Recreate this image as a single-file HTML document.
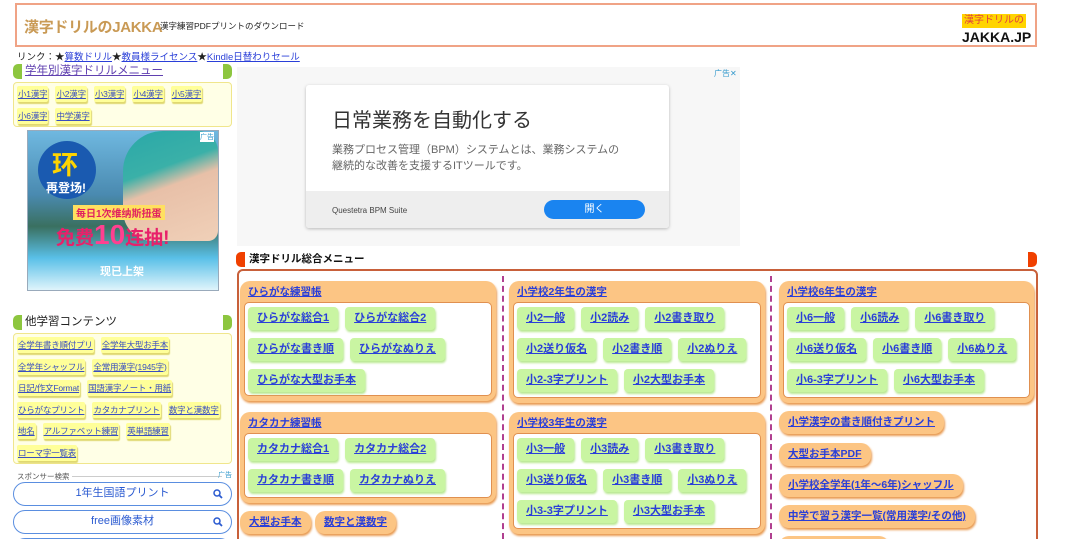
<!DOCTYPE html>
<html style="width:1080px;height:539px;overflow:hidden"><head><meta charset="utf-8"><style>
*{box-sizing:border-box;margin:0;padding:0}
body{width:1080px;height:539px;overflow:hidden;background:#fff;font-family:"Liberation Sans","Noto Sans CJK JP",sans-serif;position:relative}
.abs{position:absolute}
a{color:#2a3fd8;text-decoration:underline}
.hdr{left:15px;top:3px;width:1022px;height:44px;border:2px solid #f0a386}
.title{left:7px;top:11px;font-size:15px;font-weight:bold;color:#c99a55;letter-spacing:-0.3px}
.sub{left:143px;top:15px;font-size:8.5px;color:#222}
.logo{left:943px;top:5px;width:76px;height:36px}
.sidebox{background:#ffffe6;border:1px solid #f0e68c;border-radius:4px;padding:3px 0 0 3px;display:flex;flex-wrap:wrap}
.yb{background:#ffff99;box-shadow:1px 2px 1px #e0d870;border-radius:2px;font-size:8.5px;letter-spacing:-0.2px;height:16px;line-height:16px;padding:0 1px;margin:0 7px 5.5px 0;white-space:nowrap}
.yb a{color:#3a4fc0}
.cap{background:#8dc63f;width:9px;height:15px}
.panel{background:#fcc584;border-radius:10px;box-shadow:1px 2px 2px #e89a50;padding:4px 4px 5px 4px}
.panel .t{font-size:10.5px;height:17px;line-height:14px;padding-left:4px;font-weight:bold}
.inner{background:#fff;border:1px solid #e09050;border-radius:5px;padding:4px 0 0 3px;display:flex;flex-wrap:wrap}
.gb{background:#c9f5a2;border-radius:4px;box-shadow:1px 2px 2px #b8e890;height:23px;line-height:23px;padding:0 9px;margin:0 7px 8px 0;font-size:11px;font-weight:bold;white-space:nowrap}
.ob{background:#fcc584;border-radius:10px;box-shadow:1px 2px 2px #e89a50;height:23px;line-height:22px;padding:0 9px;font-size:10.5px;font-weight:bold;white-space:nowrap;display:inline-block}
.pill{left:13px;width:219px;height:24px;border:1.5px solid #5a8ee0;border-radius:12px;text-align:center;font-size:11px;line-height:21px;color:#2a5ad0}
.pill svg{position:absolute;right:8px;top:6px}
</style></head><body>

<div class="abs hdr">
 <div class="abs title">漢字ドリルのJAKKA</div>
 <div class="abs sub">漢字練習PDFプリントのダウンロード</div>
 <div class="abs logo">
  <div style="background:#ffd400;color:#e04040;font-size:10px;line-height:14px;display:inline-block;padding:0 2px;margin-left:2px">漢字ドリルの</div>
  <div style="font-size:14px;font-weight:bold;color:#111;line-height:18px;text-align:left;padding-left:2px">JAKKA.JP</div>
 </div>
</div>

<div class="abs" style="left:17px;top:49px;font-size:9.5px;color:#222">リンク：★<a href="#">算数ドリル</a>★<a href="#">教員様ライセンス</a>★<a href="#">Kindle日替わりセール</a></div>

<div class="abs cap" style="left:13px;top:64px;border-radius:5px 0 0 5px"></div>
<div class="abs cap" style="left:223px;top:64px;border-radius:0 5px 5px 0"></div>
<div class="abs" style="left:25px;top:64px;font-size:11.5px;line-height:15px"><a href="#" style="color:#6040b0">学年別漢字ドリルメニュー</a></div>
<div class="abs sidebox" style="left:13px;top:82px;width:219px;height:45px">
 <div class="yb"><a>小1漢字</a></div><div class="yb"><a>小2漢字</a></div><div class="yb"><a>小3漢字</a></div><div class="yb"><a>小4漢字</a></div><div class="yb"><a>小5漢字</a></div>
 <div class="yb"><a>小6漢字</a></div><div class="yb"><a>中学漢字</a></div>
</div>

<div class="abs" style="left:27px;top:130px;width:192px;height:161px;background:linear-gradient(180deg,#6fb8e0 0%,#4a8ab0 40%,#3a7060 60%,#5ac0e8 80%,#dff4fb 100%);overflow:hidden;border:1px solid #9ab">
 <div class="abs" style="left:10px;top:10px;width:58px;height:58px;border-radius:50%;background:#1a5ab0"></div>
 <div class="abs" style="left:24px;top:14px;font-size:26px;font-weight:bold;color:#ffd400">环</div>
 <div class="abs" style="left:18px;top:48px;font-size:12px;font-weight:bold;color:#fff">再登场!</div>
 <div class="abs" style="left:95px;top:0px;width:95px;height:110px;border-radius:40px 20px 10px 30px;background:linear-gradient(160deg,#2aa8a8 0%,#3ab0a8 35%,#e8c0a8 50%,#f0d0b8)"></div>
 <div class="abs" style="left:45px;top:74px;font-size:10px;font-weight:bold;color:#e02060;background:#ffe060;padding:0 3px">每日1次维纳斯扭蛋</div>
 <div class="abs" style="left:28px;top:88px;font-size:19px;font-weight:bold;color:#e8206a">免费<span style="font-size:28px;color:#ff4090">10</span>连抽!</div>
 <div class="abs" style="left:72px;top:132px;font-size:11px;font-weight:bold;color:#fff">现已上架</div>
 <div class="abs" style="left:172px;top:1px;font-size:7px;color:#39c;background:#fff">广告</div>
</div>

<div class="abs cap" style="left:13px;top:315px;border-radius:5px 0 0 5px"></div>
<div class="abs cap" style="left:223px;top:315px;border-radius:0 5px 5px 0"></div>
<div class="abs" style="left:25px;top:315px;font-size:11.5px;line-height:15px;color:#222">他学習コンテンツ</div>
<div class="abs sidebox" style="left:13px;top:333px;width:219px;height:131px;padding-top:3px">
 <div class="yb"><a>全学年書き順付プリ</a></div><div class="yb"><a>全学年大型お手本</a></div>
 <div class="yb"><a>全学年シャッフル</a></div><div class="yb"><a>全常用漢字(1945字)</a></div>
 <div class="yb"><a>日記/作文Format</a></div><div class="yb"><a>国語漢字ノート・用紙</a></div>
 <div class="yb"><a>ひらがなプリント</a></div><div class="yb"><a>カタカナプリント</a></div><div class="yb" style="margin-right:0"><a>数字と漢数字</a></div>
 <div class="yb"><a>地名</a></div><div class="yb"><a>アルファベット練習</a></div><div class="yb"><a>英単語練習</a></div>
 <div class="yb"><a>ローマ字一覧表</a></div>
</div>
<div class="abs" style="left:17px;top:471px;font-size:7.5px;color:#555">スポンサー検索</div>
<div class="abs" style="left:72px;top:476px;width:150px;border-top:1px solid #ccc"></div>
<div class="abs" style="left:218px;top:470px;font-size:7px;color:#39c">广告</div>
<div class="abs pill" style="top:482px">1年生国語プリント<svg width="10" height="10" viewBox="0 0 10 10"><circle cx="4" cy="4" r="3" fill="none" stroke="#2a5ad0" stroke-width="1.5"/><path d="M6 6L9 9" stroke="#2a5ad0" stroke-width="1.8"/></svg></div>
<div class="abs pill" style="top:510px">free画像素材<svg width="10" height="10" viewBox="0 0 10 10"><circle cx="4" cy="4" r="3" fill="none" stroke="#2a5ad0" stroke-width="1.5"/><path d="M6 6L9 9" stroke="#2a5ad0" stroke-width="1.8"/></svg></div>
<div class="abs pill" style="top:538px"></div>

<div class="abs" style="left:237px;top:67px;width:503px;height:179px;background:#f7f7f7">
 <div class="abs" style="left:477px;top:1px;font-size:8px;color:#39c">广告✕</div>
 <div class="abs" style="left:69px;top:18px;width:363px;height:143px;background:#fff;border-radius:3px;box-shadow:0 1px 3px rgba(0,0,0,.25);overflow:hidden">
  <div class="abs" style="left:26px;top:19px;font-size:20px;color:#333">日常業務を自動化する</div>
  <div class="abs" style="left:26px;top:57px;font-size:11px;line-height:16px;color:#666">業務プロセス管理（BPM）システムとは、業務システムの<br>継続的な改善を支援するITツールです。</div>
  <div class="abs" style="left:0;top:106px;width:363px;height:37px;background:#eee">
   <div class="abs" style="left:26px;top:15px;font-size:8px;color:#444">Questetra BPM Suite</div>
   <div class="abs" style="left:238px;top:9px;width:101px;height:19px;border-radius:10px;background:#1a84f0;color:#fff;font-size:10px;text-align:center;line-height:19px">開く</div>
  </div>
 </div>
</div>

<div class="abs" style="left:236px;top:252px;width:9px;height:15px;background:#f04000;border-radius:5px 0 0 5px"></div>
<div class="abs" style="left:1028px;top:252px;width:9px;height:15px;background:#f04000;border-radius:0 5px 5px 0"></div>
<div class="abs" style="left:249px;top:252px;font-size:10.5px;font-weight:bold;color:#111;line-height:15px">漢字ドリル総合メニュー</div>

<div class="abs" style="left:237px;top:269px;width:801px;height:290px;border:2px solid #c8603a;border-radius:6px"></div>
<div class="abs" style="left:502px;top:276px;height:263px;border-left:2px dashed #b04090"></div>
<div class="abs" style="left:770px;top:276px;height:263px;border-left:2px dashed #b04090"></div>

<div class="abs panel" style="left:240px;top:281px;width:256px;height:120px">
 <div class="t"><a>ひらがな練習帳</a></div>
 <div class="inner" style="height:94px">
  <div class="gb"><a>ひらがな総合1</a></div><div class="gb"><a>ひらがな総合2</a></div>
  <div class="gb"><a>ひらがな書き順</a></div><div class="gb"><a>ひらがなぬりえ</a></div>
  <div class="gb"><a>ひらがな大型お手本</a></div>
 </div>
</div>
<div class="abs panel" style="left:240px;top:412px;width:256px;height:91px">
 <div class="t"><a>カタカナ練習帳</a></div>
 <div class="inner" style="height:65px">
  <div class="gb"><a>カタカナ総合1</a></div><div class="gb"><a>カタカナ総合2</a></div>
  <div class="gb"><a>カタカナ書き順</a></div><div class="gb"><a>カタカナぬりえ</a></div>
 </div>
</div>
<div class="abs ob" style="left:240px;top:511px"><a>大型お手本</a></div>
<div class="abs ob" style="left:315px;top:511px"><a>数字と漢数字</a></div>

<div class="abs panel" style="left:509px;top:281px;width:256px;height:122px">
 <div class="t"><a>小学校2年生の漢字</a></div>
 <div class="inner" style="height:96px">
  <div class="gb"><a>小2一般</a></div><div class="gb"><a>小2読み</a></div><div class="gb"><a>小2書き取り</a></div>
  <div class="gb"><a>小2送り仮名</a></div><div class="gb"><a>小2書き順</a></div><div class="gb"><a>小2ぬりえ</a></div>
  <div class="gb"><a>小2-3字プリント</a></div><div class="gb"><a>小2大型お手本</a></div>
 </div>
</div>
<div class="abs panel" style="left:509px;top:412px;width:256px;height:122px">
 <div class="t"><a>小学校3年生の漢字</a></div>
 <div class="inner" style="height:96px">
  <div class="gb"><a>小3一般</a></div><div class="gb"><a>小3読み</a></div><div class="gb"><a>小3書き取り</a></div>
  <div class="gb"><a>小3送り仮名</a></div><div class="gb"><a>小3書き順</a></div><div class="gb"><a>小3ぬりえ</a></div>
  <div class="gb"><a>小3-3字プリント</a></div><div class="gb"><a>小3大型お手本</a></div>
 </div>
</div>

<div class="abs panel" style="left:779px;top:281px;width:255px;height:122px">
 <div class="t"><a>小学校6年生の漢字</a></div>
 <div class="inner" style="height:96px">
  <div class="gb"><a>小6一般</a></div><div class="gb"><a>小6読み</a></div><div class="gb"><a>小6書き取り</a></div>
  <div class="gb"><a>小6送り仮名</a></div><div class="gb"><a>小6書き順</a></div><div class="gb"><a>小6ぬりえ</a></div>
  <div class="gb"><a>小6-3字プリント</a></div><div class="gb"><a>小6大型お手本</a></div>
 </div>
</div>
<div class="abs ob" style="left:779px;top:411px"><a>小学漢字の書き順付きプリント</a></div>
<div class="abs ob" style="left:779px;top:443px"><a>大型お手本PDF</a></div>
<div class="abs ob" style="left:779px;top:474px"><a>小学校全学年(1年～6年)シャッフル</a></div>
<div class="abs ob" style="left:779px;top:505px"><a>中学で習う漢字一覧(常用漢字/その他)</a></div>
<div class="abs ob" style="left:779px;top:536px;width:110px"></div>

</body></html>
